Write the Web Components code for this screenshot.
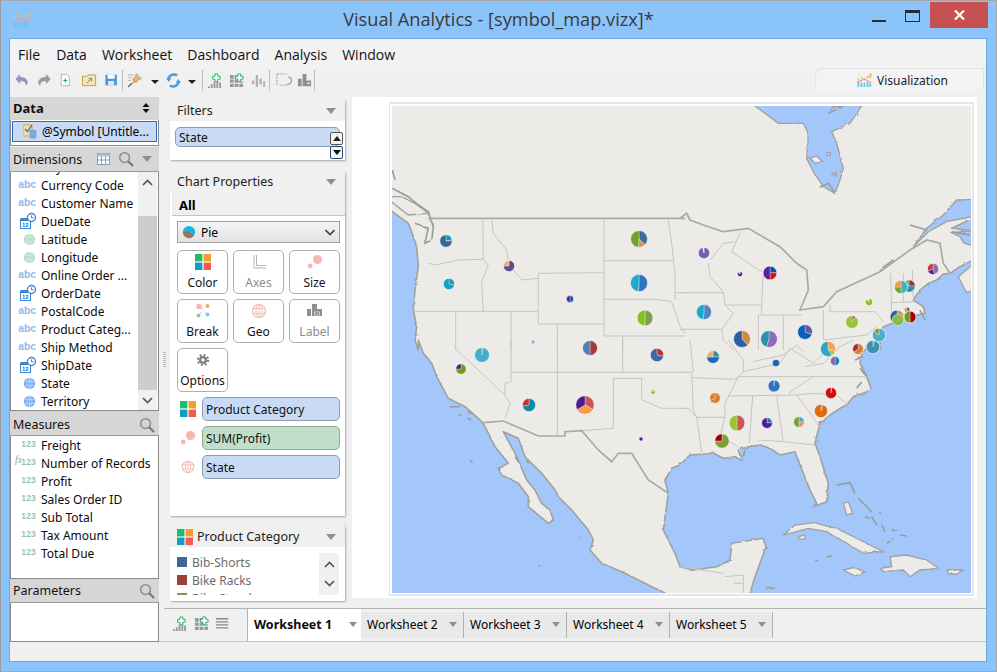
<!DOCTYPE html>
<html><head><meta charset="utf-8"><title>Visual Analytics</title>
<style>
html,body{margin:0;padding:0;overflow:hidden;background:#8ac4fb}
body{font-family:"Noto Sans","Liberation Sans",sans-serif;font-size:12px;color:#000}
</style></head><body>
<va-app>
  <va-titlebar slot="title">Visual Analytics - [symbol_map.vizx]*</va-titlebar>
  <va-menubar slot="menu"></va-menubar>
  <va-toolbar slot="tools"></va-toolbar>
  <va-datapane slot="data"></va-datapane>
  <va-midcol slot="mid"></va-midcol>
  <va-map slot="map"></va-map>
  <va-tabs slot="tabs"></va-tabs>
</va-app>
<script>
const G={g:'#1fbd6a',o:'#f89b2e',b:'#0f9dc8',r:'#f25c4f'};
const globe=(c,fill='none')=>`<circle cx="8" cy="8" r="6.5" fill="${fill}" stroke="${c}" stroke-width="1.2"/><ellipse cx="8" cy="8" rx="3" ry="6.5" fill="none" stroke="${c}" stroke-width=".9"/><path d="M8 1.5V14.5M1.8 5.6H14.2M1.8 10.4H14.2" stroke="${c}" stroke-width=".9" fill="none"/>`;
const plusG=(x,y)=>`<path d="M${x-1.5} ${y-4}h3v2.500h2.500v3h-2.500v2.500h-3v-2.500h-2.500v-3h2.500z" fill="#fff" stroke="#17b860" stroke-width="1"/>`;
const ICONS={
 color:`<rect x="0" y="0" width="7.4" height="7.4" fill="${G.g}"/><rect x="8.6" y="0" width="7.4" height="7.4" fill="${G.o}"/><rect x="0" y="8.6" width="7.4" height="7.4" fill="${G.b}"/><rect x="8.6" y="8.6" width="7.4" height="7.4" fill="${G.r}"/>`,
 size:`<circle cx="10.5" cy="5.5" r="4.6" fill="#f6b8ae"/><circle cx="3.2" cy="12" r="2.4" fill="#f6b8ae"/>`,
 geo:globe('#f6b8ae'),
 axes:`<path d="M3 1V14H15M5.5 1V11.5H15" fill="none" stroke="#b5b5b5" stroke-width="1"/>`,
 label:`<path d="M0 6h4v7H0zM5 1h5v12H5zM10 6h5v7H10z" fill="#8f8f8f"/><rect x="7.5" y="9" width="5" height="3" fill="none" stroke="#ddd" stroke-width=".8"/>`,
 brk:`<circle cx="4" cy="3.5" r="2.8" fill="#f6b8ae"/><circle cx="12.5" cy="3" r="1.9" fill="#f8a84a"/><circle cx="3.5" cy="12.5" r="1.9" fill="#8ccc94"/><circle cx="12.5" cy="11.5" r="2" fill="#8cc4f4"/><path d="M6 5l1.5 1.5M10.5 4L9 5.5M5 11l1.5-2M10.5 10L9 8.5" stroke="#aaa" stroke-width=".7"/>`,
 gear:`<circle cx="8" cy="8" r="4.6" fill="#7f7f7f"/><circle cx="8" cy="8" r="5.8" fill="none" stroke="#7f7f7f" stroke-width="2.4" stroke-dasharray="2.2 2.35"/><circle cx="8" cy="8" r="1.9" fill="#fff"/>`,
 pie:`<circle cx="8" cy="8" r="7" fill="#0db7ea"/><path d="M8 8H1A7 7 0 0 0 8 15A7 7 0 0 0 14 11.5Z" fill="#a56e5c"/>`,
 search:`<circle cx="7" cy="7" r="5.2" fill="none" stroke="#8d8d8d" stroke-width="1.6"/><path d="M10.8 10.8L16 16" stroke="#777" stroke-width="2.2"/>`,
 table:`<rect x=".5" y=".5" width="12" height="11" fill="#fff" stroke="#8a9ab0"/><rect x=".5" y=".5" width="12" height="3" fill="#a9bdd8"/><path d="M.5 7H12.5M4.5 3.5V11.5M8.5 3.5V11.5" stroke="#8a9ab0" fill="none"/>`,
 tri:`<path d="M0 0h10L5 6z" fill="#8e8e8e"/>`,
 sort:`<path d="M4 0L7.5 4H.5zM.5 6h7L4 10z" fill="#111"/>`,
 cal:`<rect x=".5" y="6.5" width="10" height="9" fill="#fff" stroke="#3b82d4"/><rect x=".5" y="5" width="10" height="3" fill="#3b82d4"/><text x="2" y="14.2" font-size="6" font-family="Liberation Sans" font-weight="700" fill="#2a6fc4">12</text><circle cx="11.5" cy="4.5" r="4" fill="#fff" stroke="#3b82d4" stroke-width="1.3"/><path d="M11.5 2.3V4.8H13.6" stroke="#3b82d4" fill="none"/>`,
 gg:`<circle cx="8" cy="8" r="7" fill="#b8dcc6"/><ellipse cx="8" cy="8" rx="3" ry="6.500" fill="none" stroke="#dcefe2" stroke-width=".8"/><path d="M8 1.500V14.500M1.800 5.600H14.200M1.800 10.400H14.200" stroke="#dcefe2" stroke-width=".8" fill="none"/>`,
 gb:`<circle cx="8" cy="8" r="7" fill="#7fadea"/><ellipse cx="8" cy="8" rx="3" ry="6.500" fill="none" stroke="#d2e3fa" stroke-width=".8"/><path d="M8 1.500V14.500M1.800 5.600H14.200M1.800 10.400H14.200" stroke="#d2e3fa" stroke-width=".8" fill="none"/>`,
 undo:`<path d="M5 2L1 6.500L5 11V8.300C9 8 11.500 9 12 13C14.800 8.500 12 4.700 5 4.800Z" fill="#a48cc4" stroke="#a48cc4" stroke-linejoin="round"/>`,
 redo:`<path d="M10 2L14 6.500L10 11V8.300C6 8 3.500 9 3 13C.2 8.500 3 4.700 10 4.800Z" fill="#9a9a9a" stroke="#9a9a9a" stroke-linejoin="round"/>`,
 newp:`<path d="M1.500 .5H8L11.500 4V14.500H1.500Z" fill="#fff" stroke="#a9a9a9"/><path d="M6.500 5.500V10.500M4 8H9" stroke="#20a050" stroke-width="1.200"/>`,
 open:`<path d="M.5 3.500H5L6.500 2H14.500V13.500H.5Z" fill="#f6e3b0" stroke="#c09a50"/><path d="M5 11L10 6M7 5.800H10.200V9" stroke="#3c8fd0" fill="none"/>`,
 save:`<path d="M.5 1.500H13.500V13.500H.5Z" fill="#4c93d2"/><rect x="3" y="1.500" width="8" height="4.500" fill="#fff"/><rect x="3.500" y="8.500" width="7" height="5" fill="#dfe9f4"/>`,
 plug:`<path d="M3 14L7 9L6 6.500L11 2L14 5L10 10L7.500 9.500Z" fill="#f3b266" stroke="#c98a3a" stroke-width=".7"/><path d="M1 15L5 11" stroke="#777" stroke-width="1.600"/><path d="M11 .5L8.500 3M15.500 5L13 7.500" stroke="#888"/><path d="M1 2H7M1 5H5M1 8H4" stroke="#b9b9b9" stroke-width="1.100"/>`,
 sync:`<path d="M12 2.800A6 6 0 0 0 2.600 6.500" fill="none" stroke="#4c9ad8" stroke-width="2.600"/><path d="M0 5.500H5.500L3 9.500Z" fill="#4c9ad8"/><path d="M4 13.200A6 6 0 0 0 13.400 9.500" fill="none" stroke="#4c9ad8" stroke-width="2.600"/><path d="M16 10.500H10.500L13 6.500Z" fill="#4c9ad8"/>`,
 down:`<path d="M0 0h8L4 4z" fill="#222"/>`,
 chartp:`<path d="M1 14h2v2H1zM4 12h2v4H4zM7 9h2v7H7zM10 9h2v7h-2zM13 10h2v6h-2z" fill="#999"/>${plusG(10,5)}`,
 tablep:`<path d="M1 2h4v4H1zM6 2h3v4H6zM1 7h4v3.500H1zM6 7h4v3.500H6zM11 9h4v1.500h-4zM1 11.500h4V15H1zM6 11.500h4V15H6zM11 11.500h4V15h-4z" fill="#999"/>${plusG(11,5)}`,
 bars:`<path d="M1 8h2.500v4H1zM5 2h2.500v13H5zM9 6h2.500v6H9zM13 9h2v6h-2z" fill="#b0b0b0"/>`,
 lasso:`<path d="M2 1h11M2 1v12M13 13H5" fill="none" stroke="#b5b5b5" stroke-width="1.400" stroke-dasharray="2.200 1"/><path d="M14 4a4 4 0 1 1-1 8" fill="none" stroke="#9a9a9a" stroke-width="1.300"/>`,
 stack:`<path d="M1 6h4v8H1zM6 1h4v13H6zM10 8h5v6h-5z" fill="#8f8f8f"/><rect x="10.800" y="10" width="3" height="2" fill="#ddd"/>`,
 lines:`<path d="M0 2h14M0 5.500h14M0 9h14M0 12.500h14" stroke="#888" stroke-width="1.500"/>`,
 logo:`<path d="M.5 10h2v6h-2zM4 11h2v5H4zM7.500 11h2v5h-2zM11 10h2v6h-2zM14 12h2v4h-2z" fill="#6cc4e4"/><path d="M.5 6.500h2v2h-2zM4.500 4.500h2v2h-2zM8 6h2v2H8zM11 3h2v3h-2zM14 .5h2.500v5H14z" fill="#f6bc3e"/><path d="M.5 10.500L8 7l8.500 4" fill="none" stroke="#e59ab8" stroke-width="1.400"/><path d="M2 1.500h1.500V3H2z" fill="#f6bc3e"/>`
};
function svgIcon(n,w,h,vb){return `<svg width="${w}" height="${h}" viewBox="${vb||'0 0 16 16'}" style="display:block;flex:none;overflow:visible">${ICONS[n]}</svg>`}
function def(name,css,html,extra){customElements.define(name,class extends HTMLElement{
  constructor(){super();const s=this.attachShadow({mode:'open'});s.innerHTML=`<style>${css}</style>`+(typeof html==='function'?html(this):html);}
  connectedCallback(){if(extra)extra(this)}
})}

def('va-app',`:host{display:flex;flex-direction:column;width:997px;height:672px;box-sizing:border-box;background:#8ac4fb;border:1px solid #a6a6a6;border-left-color:#9a9a9a;font-family:"Noto Sans","Liberation Sans",sans-serif}
.client{width:978px;height:624px;margin-left:8px;box-sizing:border-box;background:#f0f0f0;border:1px solid #6fa8dc;display:flex;flex-direction:column}
.top{flex:none}
.main{display:grid;grid-template-columns:149px 1fr;height:549px}
.right{display:flex;flex-direction:column;min-width:0}
.content{display:flex;height:516px;position:relative}
.grip{width:11px;flex:none;display:flex;align-items:center;justify-content:center}
.grip i{display:block;width:3px;height:16px;margin-top:20px;background:repeating-linear-gradient(#bbb 0 1px,transparent 1px 2px)}
.status{height:19px;border-top:1px solid #c4c4c4;background:#f0f0f0;flex:none}
`,`<slot name="title"></slot><div class="client"><div class="top"><slot name="menu"></slot><slot name="tools"></slot></div>
<div class="main"><slot name="data"></slot><div class="right"><div class="content"><div class="grip"><i></i></div><slot name="mid"></slot><slot name="map"></slot></div><slot name="tabs"></slot></div></div>
<div class="status"></div></div>`);

def('va-titlebar',`:host{display:grid;grid-template-columns:1fr auto 1fr;height:37px;flex:none;color:#3a3a3a;font:18.200px "Open Sans",sans-serif}
.logo{padding:11px 0 0 13px}.t{padding-top:6px}
.ctl{display:flex;justify-content:flex-end;height:27px;margin-right:8px;margin-top:1px}
.min{width:14px;height:2px;background:#2c2c2c;margin:18px 19px 0 0}
.max{width:13px;height:8px;border:1px solid #2c2c2c;border-top:3px solid #2c2c2c;margin:8px 10px 0 0}
.x{width:58px;height:26px;background:#c75050;display:flex;align-items:center;justify-content:center}`,
`<div class="logo">${svgIcon('logo',16,16,'0 0 17 17')}</div><div class="t"><slot></slot></div><div class="ctl"><div class="min"></div><div class="max"></div><div class="x"><svg width="11" height="10" viewBox="0 0 11 10"><path d="M1 .5L10 9.500M10 .5L1 9.500" stroke="#fff" stroke-width="2.200"/></svg></div></div>`);

def('va-menubar',`:host{display:flex;height:29px;background:#f2f2f2;align-items:flex-end;box-sizing:border-box;padding:0 0 2px 8px;font:14px "Open Sans",sans-serif;color:#111}
span{margin-right:15px;line-height:22px}span:nth-child(1){margin-right:14px}span:nth-child(2){margin-right:16px}span:nth-child(3){margin-right:15px}span:nth-child(4){margin-right:15px}`,
`<span>File</span><span>Data</span><span>Worksheet</span><span>Dashboard</span><span>Analysis</span><span>Window</span>`);

const tb=(n,l,w)=>`<div style="margin-left:${l}px;width:${w||15}px">${svgIcon(n,w||15,15)}</div>`;
const tbsep=l=>`<div class="sep" style="margin-left:${l}px"></div>`;
const tbd=l=>`<div style="margin-left:${l}px;width:8px;padding-top:4px">${svgIcon('down',8,4,'0 0 8 4')}</div>`;
def('va-toolbar',`:host{display:flex;height:24px;align-items:center;background:#f0f0f0;position:relative;box-sizing:border-box}
.sep{width:1px;height:21px;background:#bdbdbd}.w{display:flex;align-items:center;flex:1}
.tab{width:169px;height:22px;margin-right:2px;box-sizing:border-box;border:1px solid #e4e4e4;border-bottom:0;border-radius:7px 0 0 0;background:#f3f3f3;display:flex;align-items:center;justify-content:center;gap:5px;font:12px "Noto Sans",sans-serif;color:#1a2030;padding:2px 0 0 6px;align-self:flex-start}`,
`<div class="w">${tb('undo',5)}${tb('redo',7)}${tb('newp',8,13)}${tb('open',9)}${tb('save',8,14)}${tbsep(3)}${tb('plug',4)}${tbd(9)}${tb('sync',7)}${tbd(7)}${tbsep(6)}${tb('chartp',4)}${tb('tablep',7)}${tb('bars',7)}${tbsep(3)}${tb('lasso',5)}${tb('stack',7)}${tbsep(2)}</div><div class="tab">${svgIcon('logo',15,15,'0 0 17 17')}<span>Visualization</span></div>`);

def('va-hdr',`:host{display:flex;align-items:center;box-sizing:border-box;height:24px;background:#d6d6d6;padding:0 3px;font-size:12.500px;color:#111;gap:4px}
.s{flex:1}`,`<slot></slot><div class="s"></div><slot name="r"></slot>`);

def('va-field',`:host{display:flex;height:18px;align-items:center;font-size:12px;white-space:nowrap;color:#0a0a0a;position:relative}
.i{width:30px;flex:none;display:flex;justify-content:flex-end;padding-right:5px;box-sizing:border-box}
.abc{font:700 10.500px "Liberation Sans",sans-serif;color:#93b9ee;line-height:12px;margin-top:-3px;letter-spacing:-.1px}
.n{font:700 8.500px "Liberation Sans",sans-serif;color:#97c4ae;line-height:12px;letter-spacing:.2px;margin-top:-2px}
.fx{position:absolute;left:4px;top:0;font:italic 10px "Liberation Serif",serif;color:#8aa898}`,
h=>{const t=h.getAttribute('t');let m;
 if(t==='abc')m='<span class="abc">abc</span>';
 else if(t==='123')m='<span class="n">123</span>';
 else if(t==='fx')m='<span class="fx">fx</span><span class="n">123</span>';
 else m=svgIcon(t==='cal'?'cal':t,t==='cal'?16:13,t==='cal'?16:13);
 return `<div class="i">${m}</div><slot></slot>`});

def('va-scroll',`:host{position:absolute;right:1px;top:0;bottom:0;width:19px;display:flex;flex-direction:column;align-items:center;background:#f0f0f0}
.a{height:44px;width:100%;padding-top:7px;box-sizing:border-box;display:flex;justify-content:center}.t{flex:1;width:100%;background:#cdcdcd}.b{height:20px;display:flex;align-items:center}`,
`<div class="a"><svg width="11" height="7" viewBox="0 0 11 7"><path d="M1 6L5.500 1.500L10 6" fill="none" stroke="#555" stroke-width="1.700"/></svg></div><div class="t"></div><div class="b"><svg width="11" height="7" viewBox="0 0 11 7"><path d="M1 1L5.500 5.500L10 1" fill="none" stroke="#555" stroke-width="1.700"/></svg></div>`);

def('va-datapane',`:host{display:block;padding-top:5px;box-sizing:border-box;font-size:12px}
.srcwrap{height:26px;background:#fff;box-sizing:border-box;padding:1px 1px;border-bottom:1px solid #8a8a8a;border-left:1px solid #8a8a8a;border-right:1px solid #8a8a8a}
.src{height:19px;border:1px solid #2a6fc4;background:#c9daf5;display:flex;align-items:center;padding-left:10px;gap:5px;white-space:nowrap;font-size:12px}
.list{background:#fff;border:1px solid #8a8a8a;border-top:0;overflow:hidden;position:relative;box-sizing:border-box}
.dim{height:239px}.dim .in{margin-top:-14px}
.mea{height:143px}
.par{height:39px}
va-hdr{border-bottom:1px solid #9a9a9a}
`,`<va-hdr style="height:23px;font-weight:700;font-size:13px;border-bottom:0;padding-bottom:2px">Data<span slot="r" style="margin-right:6px">${svgIcon('sort',8,10,'0 0 8 10')}</span></va-hdr>
<div class="srcwrap"><div class="src"><svg width="14" height="15" viewBox="0 0 14 15" style="flex:none"><rect x="0" y="1" width="9" height="11" fill="#f6e08a" stroke="#d4a838"/><path d="M2 5l2.500 2.500L9 1" fill="none" stroke="#2a6fc4" stroke-width="1.300"/><ellipse cx="10" cy="7" rx="3.500" ry="1.500" fill="#7aa8dc"/><path d="M6.500 7V13a3.500 1.500 0 0 0 7 0V7Z" fill="#7aa8dc"/></svg><span>@Symbol [Untitle...</span></div></div>
<va-hdr style="height:25px;margin-top:1px"><span>Dimensions</span><span slot="r" style="display:flex;gap:8px;align-items:center;padding-right:4px">${svgIcon('table',13,12,'0 0 13 12')}${svgIcon('search',16,16,'0 0 17 17')}${svgIcon('tri',10,6,'0 0 10 6')}</span></va-hdr>
<div class="list dim"><div class="in">
<va-field t="abc">City</va-field><va-field t="abc">Currency Code</va-field><va-field t="abc">Customer Name</va-field><va-field t="cal">DueDate</va-field><va-field t="gg">Latitude</va-field><va-field t="gg">Longitude</va-field><va-field t="abc">Online Order ...</va-field><va-field t="cal">OrderDate</va-field><va-field t="abc">PostalCode</va-field><va-field t="abc">Product Categ...</va-field><va-field t="abc">Ship Method</va-field><va-field t="cal">ShipDate</va-field><va-field t="gb">State</va-field><va-field t="gb">Territory</va-field></div><va-scroll></va-scroll></div>
<va-hdr style="height:25px;padding-top:3px"><span>Measures</span><span slot="r" style="padding-right:1px">${svgIcon('search',16,16,'0 0 17 17')}</span></va-hdr>
<div class="list mea"><div class="in">
<va-field t="123">Freight</va-field><va-field t="fx">Number of Records</va-field><va-field t="123">Profit</va-field><va-field t="123">Sales Order ID</va-field><va-field t="123">Sub Total</va-field><va-field t="123">Tax Amount</va-field><va-field t="123">Total Due</va-field></div></div>
<va-hdr style="height:24px"><span>Parameters</span><span slot="r" style="padding-right:1px">${svgIcon('search',16,16,'0 0 17 17')}</span></va-hdr>
<div class="list par"></div>`);

def('va-card',`:host{display:block;background:#fff;border-radius:4px 4px 0 0;box-shadow:1px 1px 2px #a8a8a8;box-sizing:border-box;overflow:hidden;font-size:12px}
.h{display:flex;align-items:center;height:22px;box-sizing:border-box;padding:0 9px 1px 7px;background:#f0f0ee;font-size:12.500px;color:#222;gap:4px}.s{flex:1}
:host(.fil) .h{padding-bottom:0;padding-top:1px}
:host(.lg) .h{height:23px;padding-bottom:0;padding-top:2px}`,
`<div class="h"><slot name="icon"></slot><slot name="title"></slot><div class="s"></div>${svgIcon('tri',10,6,'0 0 10 6')}</div><slot></slot>`);

def('va-pill',`:host{display:flex;align-items:center;box-sizing:border-box;height:24px;border:1px solid #8e9cb0;border-radius:5px;background:#c9daf5;padding-left:3px;font-size:12px;color:#111}
:host([green]){background:#bfdfcb;border-color:#8fa89a}`,`<slot></slot>`);

def('va-btn',`:host{display:flex;flex-direction:column;align-items:center;box-sizing:border-box;height:44px;border:1px solid #b0b0b0;border-radius:5px;background:#fff;padding-top:3px;font-size:12px;color:#111}
:host([off]){color:#8c8c8c}
.l{margin-top:4px;line-height:17px}`,h=>`${svgIcon(h.getAttribute('i'),h.getAttribute('i')==='gear'?14:16,16)}<div class="l"><slot></slot></div>`);

def('va-midcol',`:host{display:flex;flex-direction:column;width:175px;flex:none;padding-top:7px;box-sizing:border-box;font-size:12px}
.fil{height:61px;margin-bottom:11px}.fb{padding:6px 5px 5px;position:relative}
.spin{position:absolute;right:2px;top:11px;width:13px}
.spin div{width:13px;height:13px;box-sizing:border-box;border:1px solid #555;border-radius:2px;background:#f4f4f4;display:flex;align-items:center;justify-content:center}
.spin div+div{border-color:#244a78;border-width:1.500px;margin-top:1px}
.cp{height:345px;margin-bottom:8px}
.all{background:#efefef;border-bottom:1px solid #c4c4c4;font-weight:700;font-size:13px;display:flex;align-items:center;padding:1px 0 0 7px;box-sizing:border-box;height:23px;margin-left:2px}
.dd{margin:5px 5px 0 7px;height:22px;box-sizing:border-box;border:1px solid #a0a0a0;background:linear-gradient(#f4f4f4,#e2e2e2);display:flex;align-items:center;padding:0 4px;gap:5px}.dd .s{flex:1}
.grid{display:grid;grid-template-columns:repeat(3,51px);gap:5px;margin:7px 5px 0 7px}
.pills{display:grid;grid-template-columns:32px 1fr;row-gap:5px;margin:5px 5px 0 0;align-items:center}
.pills div{display:flex;justify-content:center;padding-left:3px}
.lg{height:77px}.lb{display:flex;padding:6px 6px 0 7px;height:48px;box-sizing:border-box}
.items{flex:1;overflow:hidden;color:#6b6b6b}
.it{display:flex;align-items:center;height:18px;gap:5px}.it i{width:10px;height:10px;display:block}
.sc{width:20px;background:#f0f0f0;display:flex;flex-direction:column;justify-content:space-around;align-items:center;height:42px;padding:2px 0;box-sizing:border-box}`,
`<va-card class="fil"><span slot="title">Filters</span><div class="fb"><va-pill style="height:20px;">State</va-pill><div class="spin"><div>${'<svg width="8" height="5" viewBox="0 0 8 5"><path d="M4 0L8 5H0z" fill="#222"/></svg>'}</div><div>${'<svg width="8" height="5" viewBox="0 0 8 5"><path d="M0 0H8L4 5z" fill="#111"/></svg>'}</div></div></div></va-card>
<va-card class="cp"><span slot="title">Chart Properties</span><div class="all">All</div>
<div class="dd">${svgIcon('pie',14,14)}<span>Pie</span><span class="s"></span><svg width="10" height="7" viewBox="0 0 10 7"><path d="M.5 1L5 5.500L9.500 1" fill="none" stroke="#444" stroke-width="1.600"/></svg></div>
<div class="grid"><va-btn i="color">Color</va-btn><va-btn i="axes" off>Axes</va-btn><va-btn i="size">Size</va-btn><va-btn i="brk">Break</va-btn><va-btn i="geo">Geo</va-btn><va-btn i="label" off>Label</va-btn><va-btn i="gear">Options</va-btn></div>
<div class="pills"><div>${svgIcon('color',16,16)}</div><va-pill>Product Category</va-pill><div>${svgIcon('size',16,16)}</div><va-pill green>SUM(Profit)</va-pill><div>${svgIcon('geo',14,14)}</div><va-pill>State</va-pill></div></va-card>
<va-card class="lg"><span slot="icon">${svgIcon('color',16,16)}</span><span slot="title">Product Category</span><div class="lb"><div class="items"><div class="it"><i style="background:#3f6699"></i>Bib-Shorts</div><div class="it"><i style="background:#9c3f3d"></i>Bike Racks</div><div class="it"><i style="background:#7d9a4a"></i>Bike Stands</div></div><div class="sc"><svg width="11" height="7" viewBox="0 0 11 7"><path d="M1 6L5.500 1.500L10 6" fill="none" stroke="#555" stroke-width="1.700"/></svg><svg width="11" height="7" viewBox="0 0 11 7"><path d="M1 1L5.500 5.500L10 1" fill="none" stroke="#555" stroke-width="1.700"/></svg></div></div></va-card>`);

/* ------ map ------ */
const ORG={5:[385,100],6:[680,100],7:[385,340],8:[680,340]};
function Z(k,s){const[o,p]=ORG[k];return s.trim().split(/\s+/).map(q=>{const[x,y]=q.split(',').map(Number);return (o+x/3).toFixed(1)+','+(p+y/3).toFixed(1)}).join(' ')}
const land=['375,85 990,85',
 Z(6,'900,298 900,345 815,385 900,395 900,470 840,500 810,520 790,522 770,540 745,550 720,570 700,600 730,620 735,640 690,650 650,665 610,680 600,700 602,750'),
 Z(8,'600,0 560,25 545,40 540,70 550,90 560,110 575,150 520,170 500,195 480,205 450,225 420,250 405,310 420,350 445,430 440,485 395,502 410,490 390,450 370,400 345,335 300,345 270,325 240,315 205,320 175,330 185,360 165,350 130,355 100,340 30,345 0,375'),
 Z(7,'860,385 840,420 850,460 835,570 870,640 885,680'),
 Z(8,'40,690 110,680 150,660 155,610 250,595 258,620 225,710 210,760 205,790'),
 '665,605 665,593',
 Z(7,'800,740 720,700 650,670 615,630 625,600 610,570 560,510 520,470 510,450 470,400 420,350 400,295 355,275 395,350 425,420 450,450 470,490 495,510 505,540 490,550 430,500 430,470 400,430 350,405 340,385 370,370 330,320 300,260 290,245 240,200 190,175 155,110 140,70 115,40 100,0'),
 Z(5,'100,750 90,720 95,680 85,630 90,570 100,500 95,440 80,395 70,370 22,335 -20,320')].join(' ');
const blue=[Z(6,'215,-20 225,18 255,40 295,70 370,70 385,100 380,175 400,215 430,260 465,280 480,240 490,205 470,130 455,95 510,70 545,18 555,-20'),
 Z(6,'900,298 830,300 790,345 740,385 700,440 745,395 800,365 900,345'),
 Z(6,'815,398 900,390 900,445 850,428 840,410')];
const isl=[Z(6,'390,175 410,168 428,185 405,190'),Z(6,'442,158 450,158 450,168 442,166'),Z(6,'455,222 468,218 468,228'),Z(6,'900,475 835,530 860,578 900,565'),
 Z(8,'310,585 345,555 400,548 470,565 540,600 610,635 550,640 500,610 440,575 385,565 330,580'),
 Z(8,'600,685 635,680 630,650 680,645 740,660 775,685 720,690 690,710 670,690 610,695'),
 Z(8,'490,690 520,683 555,695 525,708'),Z(8,'800,690 850,690 830,703 805,700'),Z(8,'355,590 375,585 375,597 358,598'),
 Z(8,'490,490 505,485 518,520 500,525'),Z(5,'0,290 70,345 130,340 90,310 50,290')];
const strong=[Z(5,'130,355 900,355'),
 Z(6,'0,355 20,340 30,360 70,375 130,395 205,385 300,440 350,490 380,510 385,570 360,630 430,620 470,575 600,515 690,450 740,420 780,430 790,490 810,520'),
 Z(7,'295,248 355,243 460,288 540,288 540,275 590,272 640,330 680,365 700,340 740,340 790,420 850,460')];
const coastBits=[Z(5,'22,210 30,240'),Z(5,'22,265 70,290 100,315 130,335 145,380 140,420 120,430 125,405 130,385 90,370'),Z(6,'690,375 740,390'),Z(6,'600,510 640,480'),Z(6,'420,262 445,250 465,280'),
 Z(6,'445,40 485,20 470,18 450,25'),Z(6,'815,395 870,405'),Z(6,'720,630 735,660'),
 Z(8,'470,435 510,428 525,460'),Z(8,'535,475 555,495 575,515'),Z(8,'555,530 570,535'),Z(8,'575,530 590,555'),Z(8,'605,555 615,575'),Z(8,'635,570 650,572'),Z(8,'660,585 680,588'),Z(8,'620,610 640,595'),Z(8,'405,660 415,662'),Z(8,'440,650 455,648'),Z(8,'258,745 285,745'),Z(8,'596,518 603,520'),
 Z(8,'560,110 540,85'),Z(8,'545,125 530,145'),Z(8,'525,60 550,50'),Z(8,'195,330 190,350'),
 Z(7,'195,200 225,200'),Z(7,'220,225 228,225'),Z(7,'250,215 258,222'),Z(7,'248,235 258,240'),Z(7,'255,360 262,368'),Z(7,'342,385 348,395'),Z(7,'585,592 588,595'),Z(7,'462,675 464,680'),Z(7,'425,360 430,370'),Z(7,'390,350 400,365')];
const states=[
 Z(5,'293,358 295,478'),Z(5,'130,490 150,495 220,480 295,478 310,495 290,545 295,632'),Z(5,'85,634 460,634'),
 Z(5,'320,360 325,400 365,450 370,480 385,510 410,540 460,535'),Z(5,'460,520 657,518'),Z(5,'657,358 657,708 713,708 713,750'),Z(5,'460,520 460,672 657,672'),
 Z(5,'657,482 865,482'),Z(5,'657,598 810,598 860,605 885,680 900,700'),Z(5,'850,360 860,430 870,520 870,600'),Z(5,'870,578 900,578'),Z(5,'713,708 900,708'),
 Z(5,'378,634 378,750'),Z(5,'212,634 212,750'),Z(5,'517,675 517,750'),
 Z(7,'210,25 360,165 375,190 360,235'),Z(7,'378,0 378,125 360,130 360,165'),Z(7,'378,97 900,97'),Z(7,'517,0 517,285'),Z(7,'713,0 713,97'),Z(7,'685,115 685,265 590,272'),Z(7,'685,115 770,115 770,180 830,205 900,205'),
 Z(8,'0,97 35,97 40,210 50,232 65,340'),Z(8,'0,205 25,205 50,232 135,232'),Z(8,'38,113 165,118 175,110 565,110'),Z(8,'175,110 135,190 135,232 120,290 175,320'),Z(8,'145,168 350,165 400,160 470,165 510,200'),Z(8,'218,168 208,310'),Z(8,'290,168 310,305'),Z(8,'235,300 310,305 405,315'),Z(8,'350,165 420,260'),Z(8,'325,160 400,110'),
 Z(8,'30,0 40,97'),Z(8,'145,0 190,60 190,95 175,110'),Z(8,'190,95 300,70 330,25 400,70 440,30'),Z(8,'220,65 310,45 350,15 370,35'),Z(8,'375,80 430,70 480,20 520,0'),
 Z(6,'0,578 130,578'),Z(6,'155,455 180,398'),Z(6,'155,455 235,510 250,515 245,615 245,645'),Z(6,'90,480 130,430 165,425'),Z(6,'85,490 90,530 130,575 135,615 160,640 125,690'),Z(6,'0,688 125,688 130,720 160,750'),Z(6,'135,615 245,615'),Z(6,'235,645 235,750'),Z(6,'235,645 365,645'),Z(6,'310,645 310,750'),Z(6,'430,630 430,720'),Z(6,'450,615 450,635 585,635 610,665'),Z(6,'632,520 635,640'),Z(6,'670,520 670,605'),Z(6,'635,640 700,640'),Z(6,'635,608 705,605'),Z(6,'697,510 700,600'),Z(6,'430,720 560,705 590,680'),Z(6,'590,700 580,745'),
 Z(8,'135,710 190,705 190,760'),Z(8,'0,680 130,700'),Z(8,'160,730 190,730')];
function pie(cx,cy,r,sl){let a=0,o='';const tot=sl.reduce((s,v)=>s+v[1],0);
 if(sl.length===1)return `<circle cx="${cx}" cy="${cy}" r="${r}" fill="${sl[0][0]}" stroke="#f6f6f4" stroke-width=".5"/>`;
 for(const[c,p]of sl){const d=p/tot*360,b=a+d,x1=cx+r*Math.sin(a*Math.PI/180),y1=cy-r*Math.cos(a*Math.PI/180),x2=cx+r*Math.sin(b*Math.PI/180),y2=cy-r*Math.cos(b*Math.PI/180);
  o+=`<path d="M${cx} ${cy}L${x1.toFixed(2)} ${y1.toFixed(2)}A${r} ${r} 0 ${d>180?1:0} 1 ${x2.toFixed(2)} ${y2.toFixed(2)}Z" fill="${c}" stroke="#f6f6f4" stroke-width=".35"/>`;a=b}
 return o+`<circle cx="${cx}" cy="${cy}" r="${r}" fill="none" stroke="#f6f6f4" stroke-width=".5"/>`}
const PIES=[
[446,241,6.3,[['#0f95b0',22],['#7050a0',3],['#3a6597',75]]],
[509,266,5.7,[['#644a88',75],['#f4af6c',25]]],
[639,239,8.5,[['#3e6a9c',37],['#d09060',14],['#76a02e',49]]],
[449,284,5.7,[['#3f8b9e',28],['#12a2c6',72]]],
[639,283,8.7,[['#2f74c1',51],['#23a8cc',49]]],
[570,299,3.7,[['#1050b0',50],['#5020a0',50]]],
[645,318,8,[['#7fa04e',51],['#84c020',49]]],
[533,342,2,[['#45b0d0',70],['#6080b0',30]]],
[482,355,7.5,[['#f0f4f6',1],['#45aec8',99]]],
[461,369,5.3,[['#6d9e14',75],['#4c1f8f',25]]],
[529,405,6.7,[['#0e88ab',72],['#c23434',28]]],
[585,405,9.3,[['#c85a55',33.3],['#fb9a45',33.4],['#4c1a8e',33.3]]],
[590,348,7.6,[['#9c3f3d',50],['#4f80bb',50]]],
[657,355,6.8,[['#c23030',28],['#3e6aa4',72]]],
[653,392,2.5,[['#9cbf4c',90],['#c08040',10]]],
[641,439,2,[['#5020a0',100]]],
[713,357,6.5,[['#3f8b9e',25],['#1a6cc0',50],['#f0b080',25]]],
[715,398,5.5,[['#d98030',60],['#a03030',6],['#d98030',34]]],
[722,441,7.3,[['#7da03c',75],['#a80000',25]]],
[737,423,8,[['#c85a55',50],['#9ac634',50]]],
[767,423,5.5,[['#2e6cc0',24],['#4c1f90',76]]],
[799,422,5.5,[['#3fb0c8',25],['#d89a60',25],['#74a038',50]]],
[821,411,6.7,[['#45a0c8',5],['#dc6c14',95]]],
[831,393,5.7,[['#e0e0e0',2],['#d20f0f',98]]],
[774,386,6,[['#f0f0f0',1],['#2f74c1',99]]],
[776,363,3.6,[['#2060b0',100]]],
[828,349,7.7,[['#fb9f4e',30],['#a0c838',12],['#2aa7c8',58]]],
[835,361,4.7,[['#0e88ab',50],['#8a60b0',50]]],
[858,349,5.5,[['#d98038',65],['#a52a2a',35]]],
[873,347,6.8,[['#d0a040',4],['#3f92ae',96]]],
[704,253,5.7,[['#7c5faa',97],['#fff',3]]],
[740,274,2.7,[['#5a20a0',90],['#e0e0e0',10]]],
[770,273,7,[['#0a50a8',24],['#d21414',26],['#5c1fa0',50]]],
[704,312,7.7,[['#4f85c0',52],['#1ea7cc',48]]],
[742,339,8.5,[['#d08a40',38],['#2a5ea0',62]]],
[769,339,8.5,[['#8a6cb8',55],['#2e8fa8',45]]],
[805,332,7.5,[['#665a90',30],['#0a60c0',70]]],
[852,322,6.5,[['#c86060',10],['#9cc238',90]]],
[869,302,3.7,[['#84c020',92],['#e8e8e8',8]]],
[909,286,6.3,[['#a03030',25],['#2f8ea8',60],['#80a860',15]]],
[901,287,6.7,[['#43afcc',50],['#74a038',25],['#f79a3a',25]]],
[933,269,5.7,[['#8c6cb0',45],['#5a20a0',25],['#c83838',30]]],
[879,335,6.8,[['#4cb0cc',86],['#74a038',14]]],
[907,310,3,[['#2060a0',50],['#f79a3a',50]]],
[897,317,7,[['#d09060',30],['#2060a0',70]]],
[910,317,6,[['#a80000',50],['#6a9e14',50]]],
[898,320,5.8,[['#8cbc48',100]]]
];
def('va-map',`:host{display:block;width:625px;height:501px;margin:5px 0 0 7px;box-sizing:border-box;background:#fff;padding:5px 3px 2px 37px;flex:none}
.f{box-sizing:border-box;width:585px;height:494px;border:1px solid #e6e6e6;border-top-width:2px;border-bottom-width:2px;border-right-width:2px;padding:2px 1px 1px 2px}
svg{display:block}`,
()=>{const poly=(a,st)=>a.map(p=>`<polyline points="${p}" ${st}/>`).join('');
 return `<div class="f"><svg width="579" height="487" viewBox="392 106 579 487">
<defs><filter id="rough" filterUnits="userSpaceOnUse" x="370" y="80" width="630" height="530"><feTurbulence type="fractalNoise" baseFrequency=".18" numOctaves="2" seed="4"/><feDisplacementMap in="SourceGraphic" scale="2.600"/><feGaussianBlur stdDeviation=".35"/></filter>
<filter id="soft" filterUnits="userSpaceOnUse" x="370" y="80" width="630" height="530"><feGaussianBlur stdDeviation=".3"/></filter><clipPath id="c"><rect x="392" y="106" width="579" height="487"/></clipPath></defs>
<g clip-path="url(#c)"><rect x="392" y="106" width="579" height="487" fill="#a3c6fb"/>
<g filter="url(#rough)"><polygon points="${land}" fill="#ecebe7" stroke="#a0a09e" stroke-width="1.600" stroke-linejoin="round"/>
${blue.map(p=>`<polygon points="${p}" fill="#a3c6fb" stroke="#a0a09e" stroke-width="1.300"/>`).join('')}
${isl.map(p=>`<polygon points="${p}" fill="#ecebe7" stroke="#a0a09e" stroke-width="1.300"/>`).join('')}
${poly(coastBits,'fill="none" stroke="#9a9a98" stroke-width="1.600"')}</g>
<g filter="url(#soft)" fill="none">${poly(states,'stroke="#c6c5c1" stroke-width="1"')}${poly(strong,'stroke="#a9a9a7" stroke-width="1.700"')}</g>
${PIES.map(p=>pie(...p)).join('')}</g></svg></div>`});

const tab=(t,on)=>`<div class="tab ${on?'on':''}"><span>${t}</span>${svgIcon('tri',8,5,'0 0 10 6')}</div>`;
def('va-tabs',`:host{display:flex;height:33px;box-sizing:border-box;border-top:1px solid #b4b4b4;margin-left:5px;font-size:12px;background:#f0f0f0;align-items:stretch}
.ic{display:flex;align-items:center;gap:7px;width:84px;padding-left:8px;box-sizing:border-box;border-right:1px solid #b4b4b4;padding-bottom:3px}
.tab{display:flex;align-items:center;width:103px;box-sizing:border-box;padding:0 6px 2px 6px;justify-content:space-between;border-right:1px solid #b0b0b0;background:#e9e9e9;margin:3px 0}
.on{background:#fff;font-weight:700;font-size:12.500px;width:113px;margin:0 0 -1px;border-right:0;padding:0 4px 2px 6px;color:#0b0b0b;height:33px}
`,`<div class="ic">${svgIcon('chartp',15,15)}${svgIcon('tablep',15,15)}${svgIcon('lines',14,14)}</div>${tab('Worksheet 1',1)}${tab('Worksheet 2')}${tab('Worksheet 3')}${tab('Worksheet 4')}${tab('Worksheet 5')}`);
</script>
</body></html>
